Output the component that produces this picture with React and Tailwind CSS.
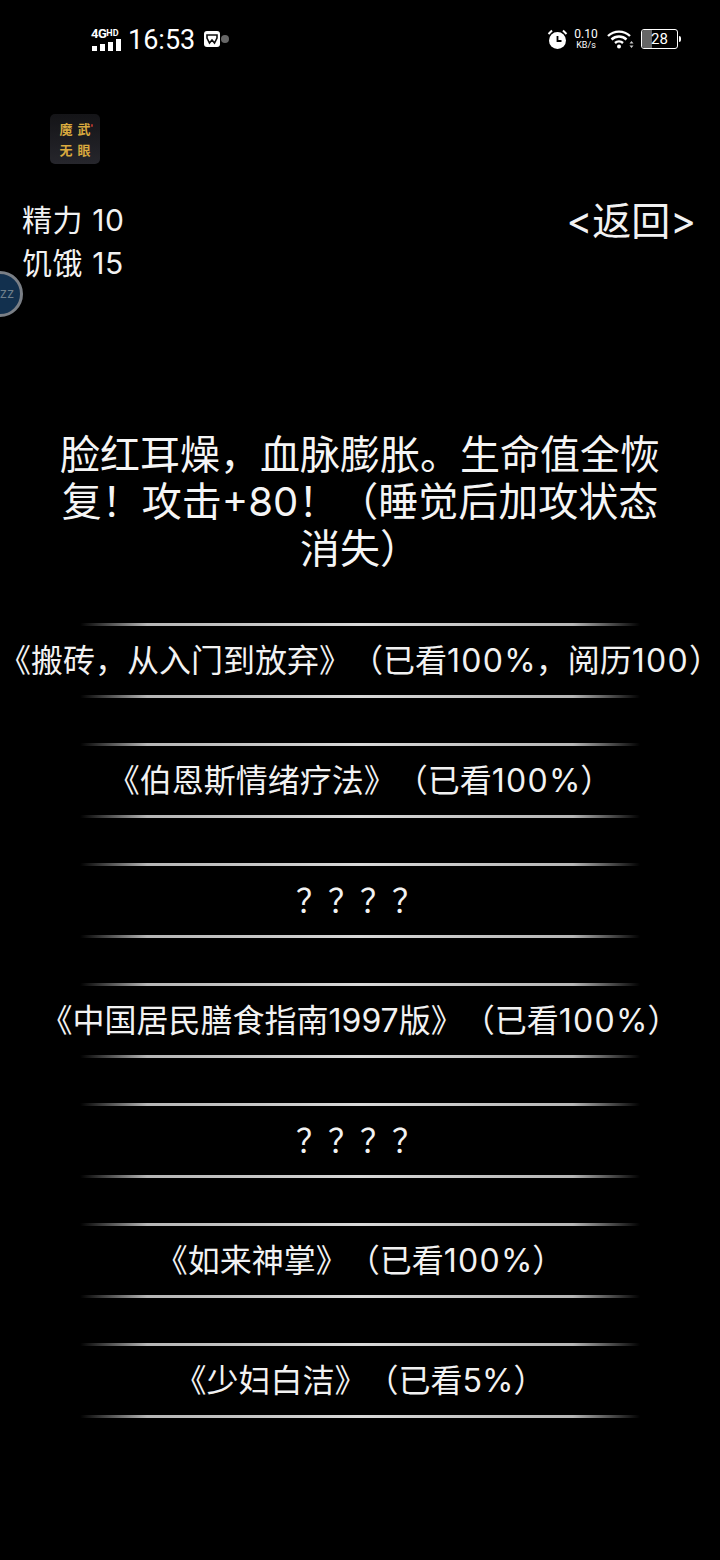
const CJK = { fontFamily: '"Inter", "Noto Sans CJK SC", "Liberation Sans", sans-serif' };
const Latin = { fontFamily: '"Roboto", "Noto Sans CJK SC", sans-serif' };

function N({ children }) {
  return <span className="tracking-[1.3px]">{children}</span>;
}

function Line() {
  return <div className="h-[3px] w-[560px] mx-auto bg-[linear-gradient(to_right,transparent,#b5b5b5_12%,#d8d8d8_50%,#b5b5b5_88%,transparent)]" />;
}

function Row({ children }) {
  return (
    <div className="flex flex-col">
      <Line />
      <div className="h-[69px] flex items-center justify-center text-[32px] leading-none text-[#f2f2f2] whitespace-pre [text-spacing-trim:space-all]">{children}</div>
      <Line />
    </div>
  );
}

function StatusBar() {
  return (
    <div className="h-[78px] flex items-center justify-between pl-[91px] pr-[39px] text-white" style={Latin}>
      <div className="flex items-center">
        <div className="flex flex-col w-[32px] mr-[5px]">
          <span className="text-[13px] font-bold leading-[11px] tracking-[-0.5px]">4G<span className="text-[9px] align-top tracking-normal">HD</span></span>
          <svg width="32" height="12" viewBox="0 0 32 12" fill="#fff">
            <rect x="1" y="7" width="5" height="5" /><rect x="9" y="5" width="5" height="7" /><rect x="17" y="3" width="5" height="9" /><rect x="25" y="0" width="5" height="12" />
          </svg>
        </div>
        <span className="text-[27px] leading-none mt-[3px]">16:53</span>
        <svg className="ml-[9px]" width="16" height="16" viewBox="0 0 16 16">
          <rect width="16" height="16" rx="3" fill="#fff" />
          <path d="M3 4h10v3l-2.500 5-2.500-3-2.500 3-2.500-5z" fill="none" stroke="#111" strokeWidth="1.600" />
        </svg>
        <div className="w-[8px] h-[8px] rounded-full bg-[#666] ml-[1px]" />
      </div>
      <div className="flex items-center">
        <svg width="21" height="21" viewBox="0 0 21 21" className="mr-[6px]">
          <circle cx="10.500" cy="11.500" r="8.500" fill="#fff" />
          <path d="M10.500 7v5h4" fill="none" stroke="#000" strokeWidth="1.800" />
          <path d="M1.500 5 5 1.500M19.500 5 16 1.500" stroke="#fff" strokeWidth="2" />
        </svg>
        <div className="flex flex-col items-center w-[24px] mr-[9px]">
          <span className="text-[12px] leading-[12px]">0.10</span>
          <span className="text-[9px] leading-[10px]">KB/s</span>
        </div>
        <svg width="27" height="20" viewBox="0 0 27 20" className="mr-[7px]">
          <path d="M1 7a16 16 0 0 1 22 0M4.500 10.500a11 11 0 0 1 15 0M8 14a6 6 0 0 1 8 0" fill="none" stroke="#fff" strokeWidth="2.400" />
          <circle cx="12" cy="17.500" r="2" fill="#fff" />
          <path d="M24.500 12l-2 2.500h4zM24.500 19l-2-2.500h4z" fill="#ccc" />
        </svg>
        <div className="relative w-[37px] h-[20px] rounded-[3px] border-[1.500px] border-white overflow-hidden">
          <div className="h-full w-[10px] bg-[#666]" />
          <span className="absolute inset-0 flex items-center justify-center text-[15px] leading-none">28</span>
        </div>
        <div className="w-[2px] h-[6px] bg-white ml-[1px] rounded-r-sm" />
      </div>
    </div>
  );
}

function Logo() {
  return (
    <div className="relative w-[50px] h-[50px] ml-[50px] mt-[36px] rounded-[5px] bg-gradient-to-b from-[#141417] to-[#26262c] grid grid-cols-2 place-items-center px-[7px] py-[4px] text-[13px] leading-none font-bold text-[#d8a93e]" style={{ fontFamily: '"Noto Sans CJK SC", serif' }}>
      <span>魔</span><span>武</span><span>无</span><span>眼</span>
      <div className="absolute right-[7px] top-[10px] w-[2px] h-[3px] rounded-full bg-[#a8332a]" />
    </div>
  );
}

export default function App() {
  return (
    <div className="relative w-[720px] h-[1560px] bg-black overflow-hidden text-white" style={CJK}>
      <StatusBar />
      <Logo />
      <div className="flex justify-between items-start pl-[22px] pr-[24px] mt-[35px] text-[#f2f2f2]">
        <div className="text-[30px] leading-[43px] tracking-[0.6px]">
          <div>精力 10</div>
          <div>饥饿 15</div>
        </div>
        <div className="text-[39px] leading-[43px]">&lt;返回&gt;</div>
      </div>
      <div className="absolute left-[-23px] top-[271px] w-[46px] h-[46px] rounded-full border-[3px] border-[#7a7f86] bg-[#12304e] flex items-center justify-center">
        <span className="text-[13px] text-[#6f7f8c] ml-[14px]">zz</span>
      </div>
      <div className="mt-[146px] mx-auto w-[620px] text-center text-[40px] leading-[47px] text-[#f5f5f5] [text-spacing-trim:space-all]">
        脸红耳燥，血脉膨胀。生命值全恢复！攻击+80！（睡觉后加攻状态消失）
      </div>
      <div className="mt-[51px] flex flex-col gap-[45px]">
        <Row>《搬砖，从入门到放弃》（已看<N>100</N>%，阅历<N>100</N>）</Row>
        <Row>《伯恩斯情绪疗法》（已看<N>100</N>%）</Row>
        <Row>？？？？</Row>
        <Row>《中国居民膳食指南1997版》（已看<N>100</N>%）</Row>
        <Row>？？？？</Row>
        <Row>《如来神掌》（已看<N>100</N>%）</Row>
        <Row>《少妇白洁》（已看5%）</Row>
      </div>
    </div>
  );
}
